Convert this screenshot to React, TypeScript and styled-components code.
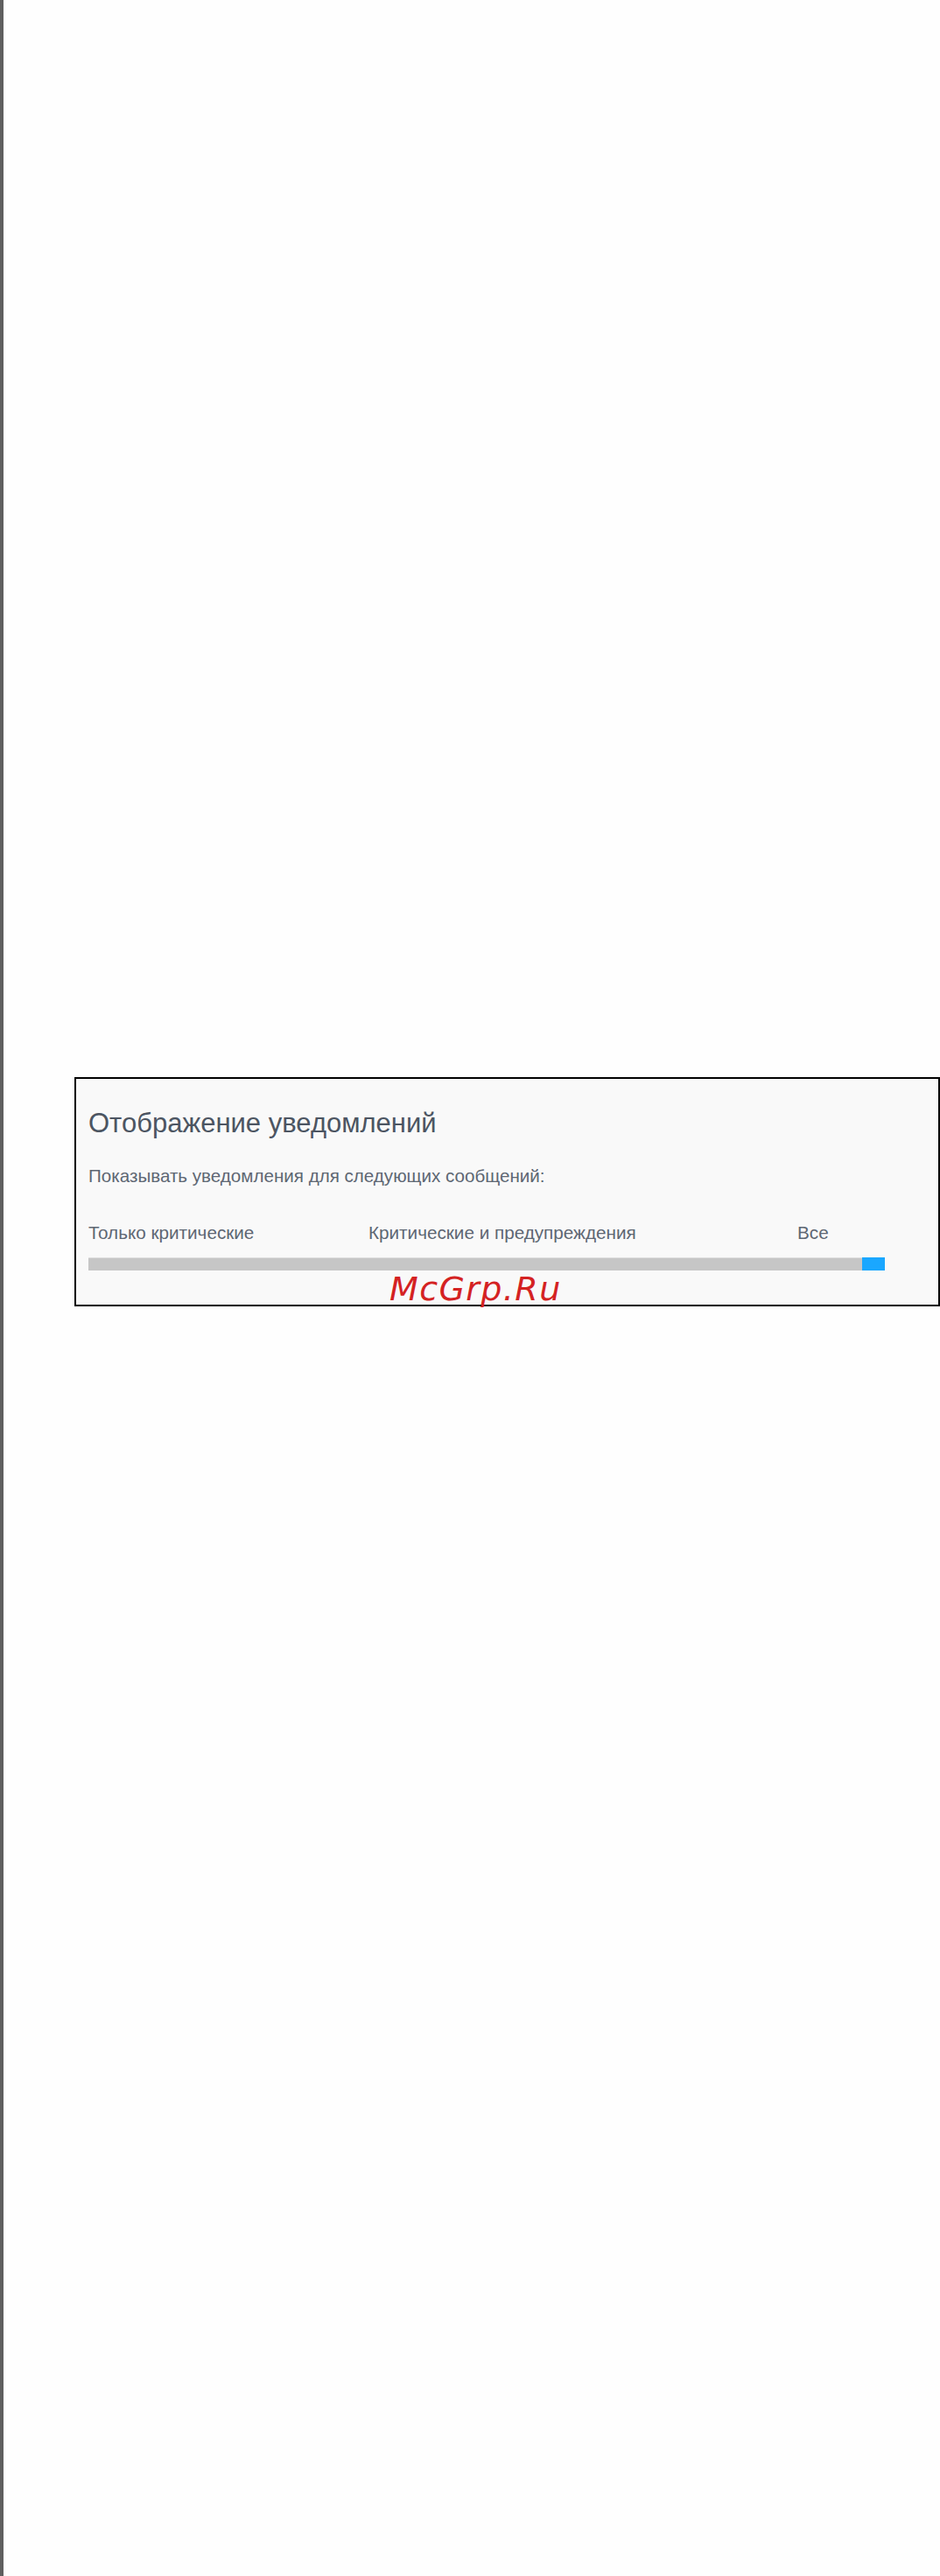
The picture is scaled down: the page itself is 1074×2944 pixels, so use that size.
import React from 'react'
import styled, { createGlobalStyle } from 'styled-components'

const GlobalStyle = createGlobalStyle`
  html, body {
    margin: 0;
    padding: 0;
    background: #fefefe;
  }
  body {
    font-family: "Liberation Sans", Arial, sans-serif;
  }
`

const Page = styled.div`
  box-sizing: border-box;
  min-height: 2944px;
  border-left: 4px solid #5f5f5f;
  padding: 1231px 0 0 81px;
`

const Panel = styled.section`
  position: relative;
  box-sizing: border-box;
  height: 262px;
  border: 2px solid #000;
  background: #f9f9f9;
  padding: 33px 14px 0;
`

const Title = styled.h2`
  margin: 0;
  font-size: 31px;
  line-height: 36px;
  font-weight: normal;
  color: #4c5562;
`

const Subtitle = styled.p`
  margin: 30px 0 0;
  font-size: 20.6px;
  line-height: 24px;
  color: #5e6773;
`

const Levels = styled.div`
  display: grid;
  grid-template-columns: 320px 490px auto;
  margin-top: 41px;
  font-size: 20.7px;
  line-height: 24px;
  color: #5e6773;
`

const Track = styled.div`
  position: relative;
  margin-top: 16px;
  width: 910px;
  height: 15px;
  box-sizing: border-box;
  background: #c6c6c6;
  border-top: 1px solid #dedede;
`

const Thumb = styled.div`
  position: absolute;
  right: 0;
  top: -1px;
  width: 26px;
  height: 15px;
  background: #1aa7ff;
`

const Watermark = styled.div`
  position: absolute;
  left: 358px;
  top: 220px;
  font-family: "DejaVu Sans", sans-serif;
  font-style: italic;
  font-size: 38px;
  line-height: 40px;
  letter-spacing: 1.4px;
  color: #d42222;
  white-space: nowrap;
`

export default function App() {
  return (
    <>
      <GlobalStyle />
      <Page>
        <Panel>
          <Title>Отображение уведомлений</Title>
          <Subtitle>Показывать уведомления для следующих сообщений:</Subtitle>
          <Levels>
            <span>Только критические</span>
            <span>Критические и предупреждения</span>
            <span>Все</span>
          </Levels>
          <Track>
            <Thumb />
          </Track>
          <Watermark>McGrp.Ru</Watermark>
        </Panel>
      </Page>
    </>
  )
}
